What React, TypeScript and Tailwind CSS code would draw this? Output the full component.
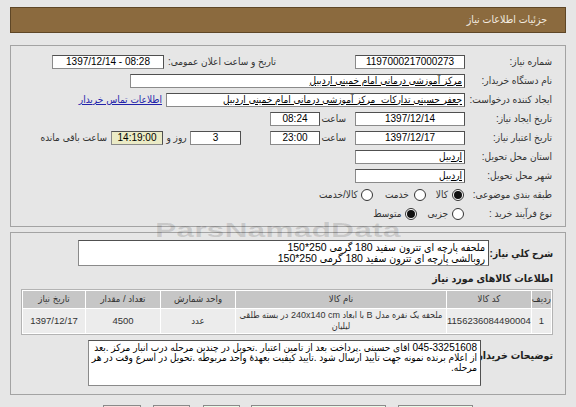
import React from "react";

const FONT = '"Liberation Sans","DejaVu Sans Condensed","DejaVu Sans",sans-serif';

function Box({
  w,
  h = "h-[14px]",
  className = "",
  children,
}: {
  w: string;
  h?: string;
  className?: string;
  children?: React.ReactNode;
}) {
  return (
    <div
      className={`${w} ${h} shrink-0 bg-white border border-[#8a8a8a] border-t-[#505050] border-r-[#505050] flex items-center text-black leading-none overflow-hidden whitespace-nowrap ${className}`}
    >
      {children}
    </div>
  );
}

function Radio({ checked }: { checked?: boolean }) {
  return (
    <span className="inline-flex w-[12px] h-[12px] rounded-full border border-[#333] bg-white items-center justify-center shrink-0">
      {checked && <span className="block w-[8px] h-[8px] rounded-full bg-[#111]" />}
    </span>
  );
}

function Row({ label, children }: { label: string; children?: React.ReactNode }) {
  return (
    <div className="flex items-center h-[19px] pr-[13px]">
      <div className="w-[87px] shrink-0 text-[#333] whitespace-nowrap">{label}</div>
      {children}
    </div>
  );
}

export default function App() {
  return (
    <div
      dir="rtl"
      className="relative w-[576px] h-[407px] overflow-hidden bg-[#e6e6e6] text-[10px]"
      style={{ fontFamily: FONT }}
    >
      <div className="h-[7px]" />
      {/* Header */}
      <div className="mx-[10px] h-[26px] bg-[#8b6a3e] border border-[#5e4626] flex items-center pr-[18px] text-[#f3ece0] text-[10.5px]">
        جزئیات اطلاعات نیاز
      </div>

      {/* Panel 1 */}
      <div className="mx-[10px] mt-[12px] h-[182px] border border-[#a3a3a3] pt-[6px]">
        <Row label="شماره نیاز:">
          <Box w="w-[110px]" className="justify-center">1197000217000273</Box>
          <div className="w-[112px] mr-[79px] shrink-0 text-[#333] whitespace-nowrap">تاریخ و ساعت اعلان عمومی:</div>
          <Box w="w-[112px]" className="justify-center">
            <span dir="ltr">1397/12/14 - 08:28</span>
          </Box>
        </Row>
        <Row label="نام دستگاه خریدار:">
          <Box w="w-[335px]" className="pr-[2px]">
            <span className="underline">مرکز آموزشی درمانی امام خمینی اردبیل</span>
          </Box>
        </Row>
        <Row label="ایجاد کننده درخواست:">
          <Box w="w-[299px]" className="pr-[2px]">
            <span className="underline">جعفر حسینی تدارکات&nbsp; مرکز آموزشی درمانی امام خمینی اردبیل</span>
          </Box>
          <span className="mr-[4px] text-[#2222aa] underline whitespace-nowrap">اطلاعات تماس خریدار</span>
        </Row>
        <Row label="تاریخ ایجاد نیاز:">
          <Box w="w-[110px]" className="justify-center">1397/12/14</Box>
          <div className="w-[35px] pr-[9px] shrink-0 text-[#333]">ساعت</div>
          <Box w="w-[50px]" className="justify-center">08:24</Box>
        </Row>
        <Row label="تاریخ اعتبار نیاز:">
          <Box w="w-[110px]" className="justify-center">1397/12/17</Box>
          <div className="w-[35px] pr-[9px] shrink-0 text-[#333]">ساعت</div>
          <Box w="w-[50px]" className="justify-center">23:00</Box>
          <Box w="w-[51px]" className="justify-center mr-[29px]">3</Box>
          <div className="w-[27px] shrink-0 text-center text-[#333]">روز و</div>
          <Box w="w-[52px]" className="justify-center !bg-[#ebebc6] text-[#333]">14:19:00</Box>
          <div className="mr-[4px] shrink-0 text-[#333] whitespace-nowrap">ساعت باقی مانده</div>
        </Row>
        <Row label="استان محل تحویل:">
          <Box w="w-[110px]" className="pr-[2px]">
            <span className="underline">اردبیل</span>
          </Box>
        </Row>
        <Row label="شهر محل تحویل:">
          <Box w="w-[110px]" className="pr-[2px]">
            <span className="underline">اردبیل</span>
          </Box>
        </Row>
        <Row label="طبقه بندی موضوعی:">
          <div className="flex items-center text-[#333] whitespace-nowrap">
            <span className="mr-[1px] flex"><Radio checked /></span>
            <span className="mr-[4px]">کالا</span>
            <span className="mr-[10px] flex"><Radio /></span>
            <span className="mr-[5px]">خدمت</span>
            <span className="mr-[12px] flex"><Radio /></span>
            <span className="mr-[3px]">کالا/خدمت</span>
          </div>
        </Row>
        <Row label="نوع فرآیند خرید :">
          <div className="flex items-center text-[#333] whitespace-nowrap">
            <span className="mr-[1px] flex"><Radio /></span>
            <span className="mr-[4px]">جزیی</span>
            <span className="mr-[10px] flex"><Radio checked /></span>
            <span className="mr-[4px]">متوسط</span>
          </div>
        </Row>
      </div>

      {/* Panel 2 */}
      <div className="mx-[10px] mt-[5px] h-[163px] border border-[#a3a3a3] pt-[7px] pr-[12px] pl-[10px]">
        <div className="flex items-center">
          <div className="w-[64px] shrink-0 font-bold text-[10px] text-[#222] whitespace-nowrap">شرح کلي نیاز:</div>
          <Box w="w-[411px]" h="h-[26px]" className="!items-start !whitespace-normal pr-[3px] pt-[1px] leading-[12px] text-[10.5px]">
            <div>
              ملحفه پارچه ای تترون سفید 180 گرمی 250*150
              <br />
              روبالشی پارچه ای تترون سفید 180 گرمی 250*150
            </div>
          </Box>
        </div>
        <div className="mt-[5px] h-[16px] flex items-center font-bold text-[10.5px] text-[#222]">
          اطلاعات کالاهای مورد نیاز
        </div>
        <table className="mt-[2px] w-[532px] border-separate border-spacing-[1px] border border-[#b3b3b3] bg-white text-[9.5px] text-[#333]">
          <thead>
            <tr className="h-[17px] bg-[#c6c6c6]">
              <th className="w-[19px] font-normal">ردیف</th>
              <th className="w-[76px] font-normal">کد کالا</th>
              <th className="w-[210px] font-normal">نام کالا</th>
              <th className="w-[74px] font-normal">واحد شمارش</th>
              <th className="w-[74px] font-normal">تعداد / مقدار</th>
              <th className="font-normal">تاریخ نیاز</th>
            </tr>
          </thead>
          <tbody>
            <tr className="h-[24px] bg-[#ececec]">
              <td className="text-center">1</td>
              <td className="text-center">1156236084490004</td>
              <td className="text-center leading-[11px] text-[9px]">
                ملحفه یک نفره مدل B با ابعاد 240x140 cm در بسته طلقی
                <br />
                لیلیان
              </td>
              <td className="text-center">عدد</td>
              <td className="text-center">4500</td>
              <td className="text-center">1397/12/17</td>
            </tr>
          </tbody>
        </table>
        <div className="mt-[5px] flex items-start">
          <div className="w-[72px] shrink-0 pt-[8px] font-bold text-[10.5px] text-[#222] whitespace-nowrap">توضیحات خریدار:</div>
          <Box w="w-[393px]" h="h-[46px]" className="!items-start !whitespace-normal pr-[3px] pt-[2px] leading-[13px] text-[10px]">
            <div>
              045-33251608 اقای حسینی .پرداخت بعد از تامین اعتبار .تحویل در چندین مرحله درب انبار مرکز .بعد از اعلام برنده نمونه جهت تایید ارسال شود .تایید کیفیت بعهدهٔ واحد مربوطه .تحویل در اسرع وقت در هر مرحله.
            </div>
          </Box>
        </div>
      </div>

      {/* Buttons */}
      <div dir="ltr" className="flex mt-[10px] pl-[103px]">
        <div className="w-[38px] h-[20px] bg-[#fbdcdc] border border-[#8a8a8a]" />
        <div className="w-[37px] h-[20px] ml-[12px] bg-[#fbdcdc] border border-[#8a8a8a]" />
        <div className="w-[37px] h-[20px] ml-[13px] bg-[#eafbea] border border-[#8a8a8a]" />
        <div className="w-[135px] h-[20px] ml-[11px] bg-[#eafbea] border border-[#8a8a8a]" />
        <div className="w-[75px] h-[20px] ml-[12px] bg-[#eafbea] border border-[#8a8a8a]" />
      </div>

      {/* Watermark */}
      <div
        dir="ltr"
        className="pointer-events-none absolute left-[155px] top-[220px] origin-left scale-x-[1.6] text-[20px] font-bold leading-none text-black/[0.12]"
        style={{ fontFamily: '"Liberation Sans",sans-serif' }}
      >
        ParsNamadData
      </div>
    </div>
  );
}
